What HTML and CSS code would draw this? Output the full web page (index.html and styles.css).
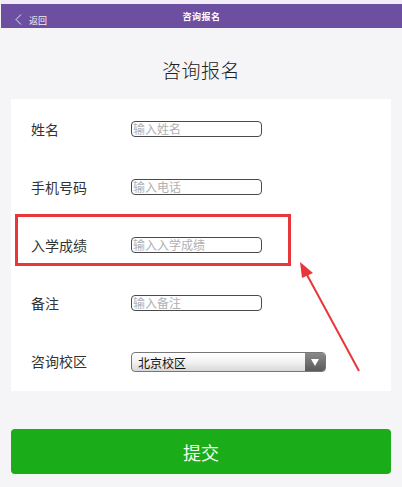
FILE: index.html
```html
<!DOCTYPE html>
<html lang="zh">
<head>
<meta charset="utf-8">
<link rel="stylesheet" href="styles.css">
</head>
<body>
<div class="topbar">
  <div class="back">
    <svg class="chev" width="7" height="11" viewBox="0 0 7 11"><path d="M6 0.5 L1 5.5 L6 10.5" fill="none" stroke="#e9e2f4" stroke-width="1"/></svg>
    <span>返回</span>
  </div>
  <div class="title">咨询报名</div>
</div>
<div class="heading">咨询报名</div>
<div class="card">
  <div class="row"><span class="label">姓名</span><div class="input">输入姓名</div></div>
  <div class="row"><span class="label">手机号码</span><div class="input">输入电话</div></div>
  <div class="row"><span class="label">入学成绩</span><div class="input">输入入学成绩</div></div>
  <div class="row"><span class="label">备注</span><div class="input">输入备注</div></div>
  <div class="row"><span class="label">咨询校区</span>
    <div class="select"><span class="sel-text">北京校区</span><span class="sel-btn"><svg width="8" height="7" viewBox="0 0 8 7"><path d="M0 0 H8 L4 7 Z" fill="#fff"/></svg></span></div>
  </div>
  <div class="highlight"></div>
  <svg class="arrow" width="80" height="120" viewBox="0 0 80 120">
    <line x1="68" y1="112" x2="15" y2="14" stroke="#e8373a" stroke-width="2"/>
    <path d="M9 3 L22 14 L11 19 Z" fill="#e8373a"/>
  </svg>
</div>
<div class="submit">提交</div>
</body>
</html>
```
FILE: styles.css
```css
html, body {
  margin: 0;
  padding: 0;
}
body {
  background: #f5f5f7;
  font-family: "Noto Sans CJK SC", "Noto Sans", sans-serif;
  width: 402px;
  height: 487px;
  overflow: hidden;
}
.topbar {
  border-top: 4px solid #f1ecf6;
  height: 24px;
  background: #6c4fa0;
  margin-left: 1px;
  position: relative;
  display: flex;
  align-items: center;
  justify-content: center;
  color: #fff;
}
.back {
  position: absolute;
  left: 14px;
  top: 7px;
  display: flex;
  align-items: center;
  gap: 7px;
  font-size: 9px;
  color: #f4f0fa;
}
.back span {
  margin-top: 3px;
}
.title {
  font-size: 9px;
  font-weight: bold;
  letter-spacing: 0.5px;
}
.heading {
  height: 61px;
  padding-top: 11px;
  box-sizing: content-box;
  display: flex;
  align-items: center;
  justify-content: center;
  font-size: 19px;
  font-weight: 300;
  color: #222;
  letter-spacing: 0.5px;
  margin-bottom: -1px;
}
.card {
  position: relative;
  margin: 0 11px;
  background: #fff;
  height: 292px;
  padding-top: 1px;
  box-sizing: border-box;
}
.row {
  height: 58px;
  display: flex;
  align-items: center;
  padding-left: 20px;
}
.label {
  width: 100px;
  font-size: 14px;
  color: #333;
}
.input {
  width: 131px;
  height: 16px;
  box-sizing: border-box;
  border: 1px solid #4a4a4a;
  border-radius: 4px;
  font-size: 12px;
  line-height: 14px;
  color: #b0b0b0;
  padding-left: 1px;
  white-space: nowrap;
  overflow: hidden;
}
.select {
  width: 195px;
  height: 20px;
  box-sizing: border-box;
  border: 1px solid #777;
  border-radius: 4px;
  background: linear-gradient(#ffffff, #f2f2f2 50%, #d8d8d8);
  display: flex;
  align-items: center;
  overflow: hidden;
  margin-top: 2px;
}
.sel-text {
  flex: 1;
  padding-left: 6px;
  font-size: 12px;
  color: #111;
}
.sel-btn {
  width: 20px;
  height: 100%;
  background: linear-gradient(#8a8a8a, #5a5a5a);
  display: flex;
  align-items: center;
  justify-content: center;
}
.highlight {
  position: absolute;
  left: 4px;
  top: 115px;
  width: 276px;
  height: 52px;
  box-sizing: border-box;
  border: 3px solid #e8373a;
}
.arrow {
  position: absolute;
  left: 280px;
  top: 160px;
}
.submit {
  margin: 38px 11px 0;
  height: 45px;
  background: #1aad19;
  border-radius: 4px;
  color: #f2fff0;
  font-size: 18px;
  display: flex;
  align-items: center;
  justify-content: center;
}
```
